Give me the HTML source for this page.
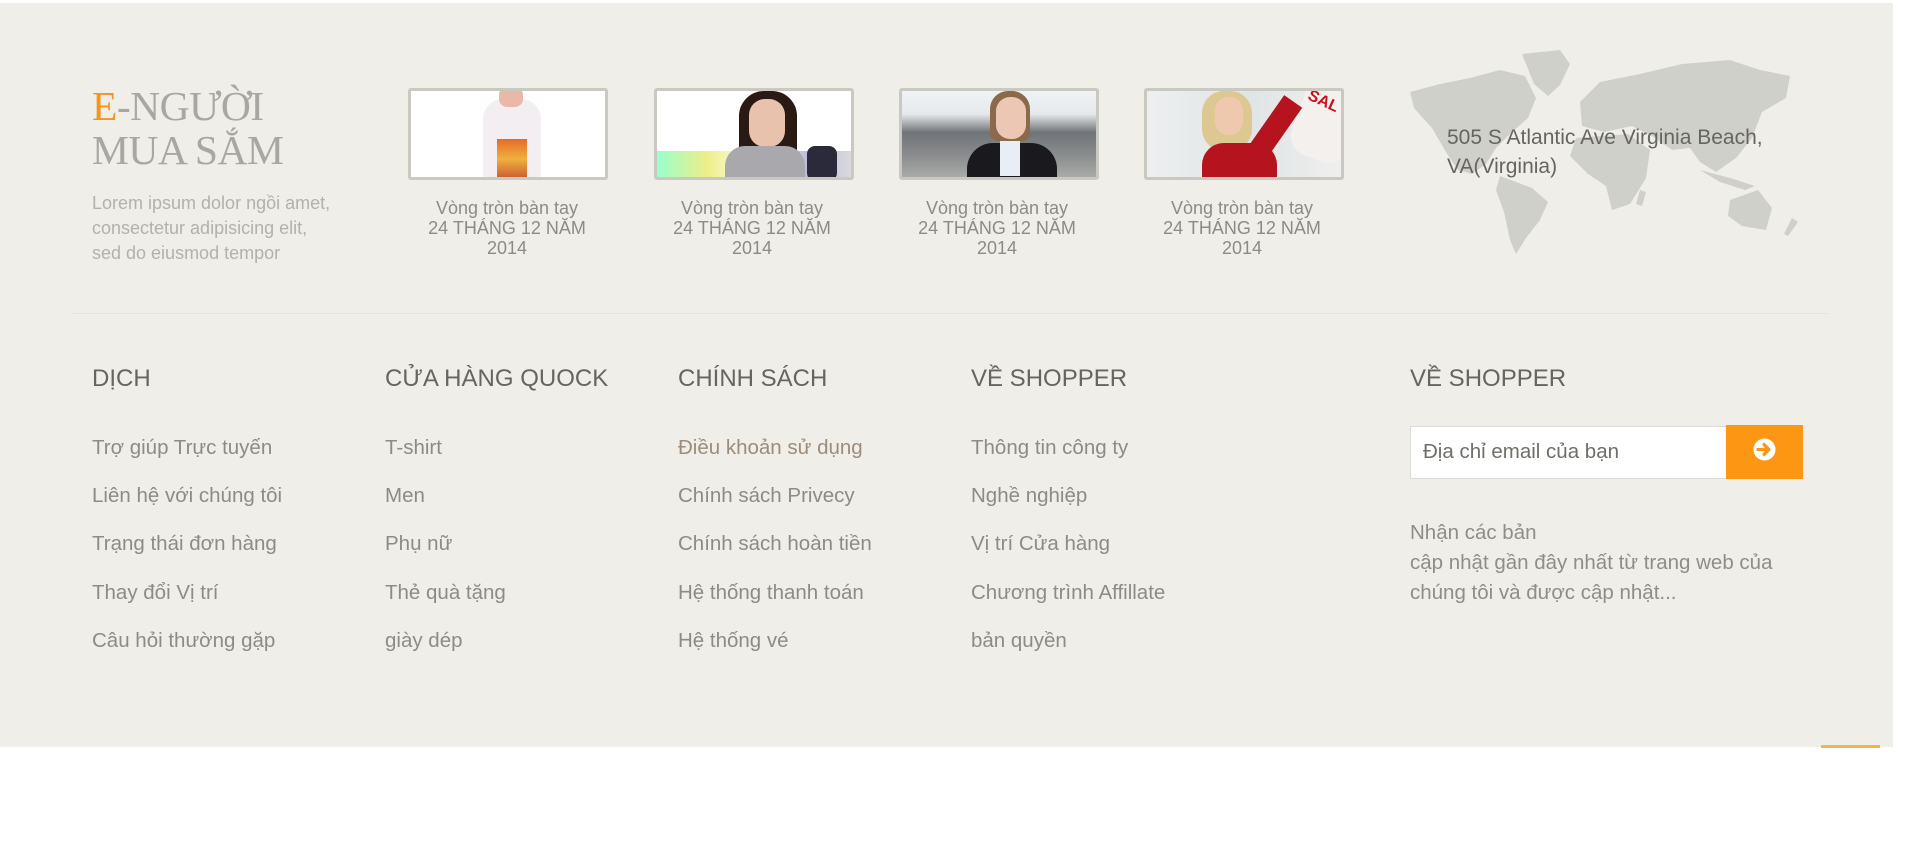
<!DOCTYPE html>
<html><head><meta charset="utf-8">
<style>
*{margin:0;padding:0;box-sizing:border-box}
html,body{width:1914px;height:867px;background:#fff;overflow:hidden;font-family:"Liberation Sans",Arial,sans-serif}
#foot{position:absolute;left:0;top:3px;width:1893px;height:744px;background:#efeee8}
.abs{position:absolute}
.title{left:92px;top:84px;font-family:"Liberation Serif","Times New Roman",serif;font-size:41.5px;line-height:44px;color:#a9a8a0;letter-spacing:-0.5px}
.title span{color:#f7941d}
.lorem{left:92px;top:191px;font-size:18px;line-height:25px;color:#b2b1aa}
.thumb{position:absolute;top:88px;width:200px;height:92px;border:3px solid #c9c9c2;border-radius:3px;overflow:hidden;background:#fff}
.cap{position:absolute;top:198px;width:200px;text-align:center;font-size:18px;line-height:20px;color:#8c8b86}
.addr{left:1447px;top:123px;font-size:21px;line-height:29px;color:#66665f}
.hr{left:71px;top:313px;width:1757px;height:1px;background:#e4e3dc}
.h{position:absolute;top:365px;font-size:24px;color:#66655f}
.links{position:absolute;top:424px;font-size:20.5px;line-height:48.2px;color:#8d8b85}
.email{left:1410px;top:426px;width:317px;height:53px;background:#fff;border:1px solid #dcdcd6;font-size:20.5px;color:#6f6e69;padding:13px 12px}
.btn{left:1726px;top:425px;width:77px;height:54px;background:#fd9713}
.sub{left:1410px;top:518px;font-size:20.5px;line-height:30px;color:#8f8d87}
</style></head><body>
<div id="foot"></div>
<div class="abs title"><span>E</span>-NGƯỜI<br>MUA SẮM</div>
<div class="abs lorem">Lorem ipsum dolor ngồi amet,<br>consectetur adipisicing elit,<br>sed do eiusmod tempor</div>

<div class="thumb" style="left:408px">
  <div class="abs" style="left:72px;top:8px;width:58px;height:90px;background:#f3eef2;border-radius:20px 20px 0 0"></div>
  <div class="abs" style="left:88px;top:-4px;width:24px;height:20px;background:#e8b8a8;border-radius:8px"></div>
  <div class="abs" style="left:86px;top:48px;width:30px;height:40px;background:linear-gradient(#e66a28,#f0b040 50%,#c85a30)"></div>
</div>
<div class="thumb" style="left:654px">
  <div class="abs" style="left:0;top:60px;width:200px;height:30px;background:linear-gradient(90deg,#9fc,#ee8,#fff,#bbd,#ddd)"></div>
  <div class="abs" style="left:82px;top:0;width:58px;height:80px;background:#2a1a14;border-radius:25px 25px 5px 5px"></div>
  <div class="abs" style="left:92px;top:8px;width:36px;height:48px;background:#e9c2ae;border-radius:16px"></div>
  <div class="abs" style="left:68px;top:55px;width:80px;height:40px;background:#a9a9ad;border-radius:20px 20px 0 0"></div>
  <div class="abs" style="left:150px;top:55px;width:30px;height:35px;background:#2a2a3a;border-radius:8px"></div>
</div>
<div class="thumb" style="left:899px">
  <div class="abs" style="left:0;top:0;width:200px;height:92px;background:linear-gradient(#f0f3f5 0,#e6e9ec 25%,#707478 45%,#8a8c8e 70%,#b0b4b0)"></div>
  <div class="abs" style="left:88px;top:0;width:40px;height:50px;background:#8a6a4a;border-radius:18px 18px 8px 8px"></div>
  <div class="abs" style="left:94px;top:6px;width:30px;height:42px;background:#ecc8b4;border-radius:14px"></div>
  <div class="abs" style="left:65px;top:52px;width:90px;height:45px;background:#1a1a1e;border-radius:26px 26px 0 0"></div>
  <div class="abs" style="left:98px;top:50px;width:20px;height:35px;background:#e8eef4"></div>
</div>
<div class="thumb" style="left:1144px">
  <div class="abs" style="left:0;top:0;width:200px;height:92px;background:linear-gradient(90deg,#eef0f0,#dfe4e6 50%,#f0f0ee)"></div>
  <div class="abs" style="left:150px;top:-10px;width:60px;height:80px;background:#f3f0ee;border-radius:20px;transform:rotate(20deg)"></div>
  <div class="abs" style="left:160px;top:2px;font:bold 16px 'Liberation Sans';color:#c8101e;transform:rotate(25deg)">SAL</div>
  <div class="abs" style="left:55px;top:0;width:50px;height:60px;background:#dcc890;border-radius:22px"></div>
  <div class="abs" style="left:68px;top:6px;width:28px;height:38px;background:#efc8ae;border-radius:13px"></div>
  <div class="abs" style="left:55px;top:52px;width:75px;height:45px;background:#b5141e;border-radius:22px 22px 0 0"></div>
  <div class="abs" style="left:118px;top:5px;width:22px;height:60px;background:#b5141e;transform:rotate(35deg)"></div>
</div>
<div class="cap" style="left:407px">Vòng tròn bàn tay<br>24 THÁNG 12 NĂM<br>2014</div>
<div class="cap" style="left:652px">Vòng tròn bàn tay<br>24 THÁNG 12 NĂM<br>2014</div>
<div class="cap" style="left:897px">Vòng tròn bàn tay<br>24 THÁNG 12 NĂM<br>2014</div>
<div class="cap" style="left:1142px">Vòng tròn bàn tay<br>24 THÁNG 12 NĂM<br>2014</div>

<svg class="abs" style="left:1400px;top:40px" width="420" height="220" viewBox="0 0 420 220">
<g fill="#d0d0ca">
<path d="M10,52 L40,44 L70,38 L100,30 L125,36 L136,58 L128,78 L112,92 L96,108 L86,124 L72,134 L58,130 L46,112 L32,88 L14,68 Z"/>
<path d="M122,14 L160,10 L170,24 L160,45 L148,56 L134,44 Z"/>
<path d="M100,136 L132,148 L148,162 L140,180 L126,198 L116,214 L110,200 L104,172 L96,150 Z"/>
<path d="M180,62 L200,42 L240,34 L282,24 L330,20 L360,30 L390,36 L386,58 L362,72 L352,98 L336,118 L316,132 L300,122 L290,108 L272,110 L252,96 L232,86 L204,92 L182,86 Z"/>
<path d="M176,98 L228,94 L250,110 L246,138 L230,164 L212,170 L206,146 L188,134 L170,116 Z"/>
<path d="M300,130 L330,138 L355,146 L345,150 L320,142 Z"/>
<path d="M330,160 L358,150 L372,168 L366,190 L342,186 L328,176 Z"/>
<path d="M392,178 L398,182 L388,196 L384,194 Z"/>
<path d="M240,150 L246,152 L242,166 L236,164 Z"/>
</g></svg>
<div class="abs addr">505 S Atlantic Ave Virginia Beach,<br>VA(Virginia)</div>

<div class="abs hr"></div>

<div class="h" style="left:92px">DỊCH</div>
<div class="h" style="left:385px">CỬA HÀNG QUOCK</div>
<div class="h" style="left:678px">CHÍNH SÁCH</div>
<div class="h" style="left:971px">VỀ SHOPPER</div>
<div class="h" style="left:1410px">VỀ SHOPPER</div>

<div class="links" style="left:92px">Trợ giúp Trực tuyến<br>Liên hệ với chúng tôi<br>Trạng thái đơn hàng<br>Thay đổi Vị trí<br>Câu hỏi thường gặp</div>
<div class="links" style="left:385px">T-shirt<br>Men<br>Phụ nữ<br>Thẻ quà tặng<br>giày dép</div>
<div class="links" style="left:678px"><span style="color:#9c8c7a">Điều khoản sử dụng</span><br>Chính sách Privecy<br>Chính sách hoàn tiền<br>Hệ thống thanh toán<br>Hệ thống vé</div>
<div class="links" style="left:971px">Thông tin công ty<br>Nghề nghiệp<br>Vị trí Cửa hàng<br>Chương trình Affillate<br>bản quyền</div>

<div class="abs email">Địa chỉ email của bạn</div>
<div class="abs btn"><svg width="77" height="54" viewBox="0 0 77 54"><circle cx="38.5" cy="24.5" r="11" fill="#fff"/><path d="M32,24.5 H42 M38,19.5 L43,24.5 L38,29.5" stroke="#fd9713" stroke-width="3.2" fill="none" stroke-linecap="round" stroke-linejoin="round"/></svg></div>
<div class="abs sub">Nhận các bản<br>cập nhật gần đây nhất từ trang web của<br>chúng tôi và được cập nhật...</div>

<div class="abs" style="left:1821px;top:745px;width:59px;height:3px;background:#f6b24e"></div>
</body></html>
